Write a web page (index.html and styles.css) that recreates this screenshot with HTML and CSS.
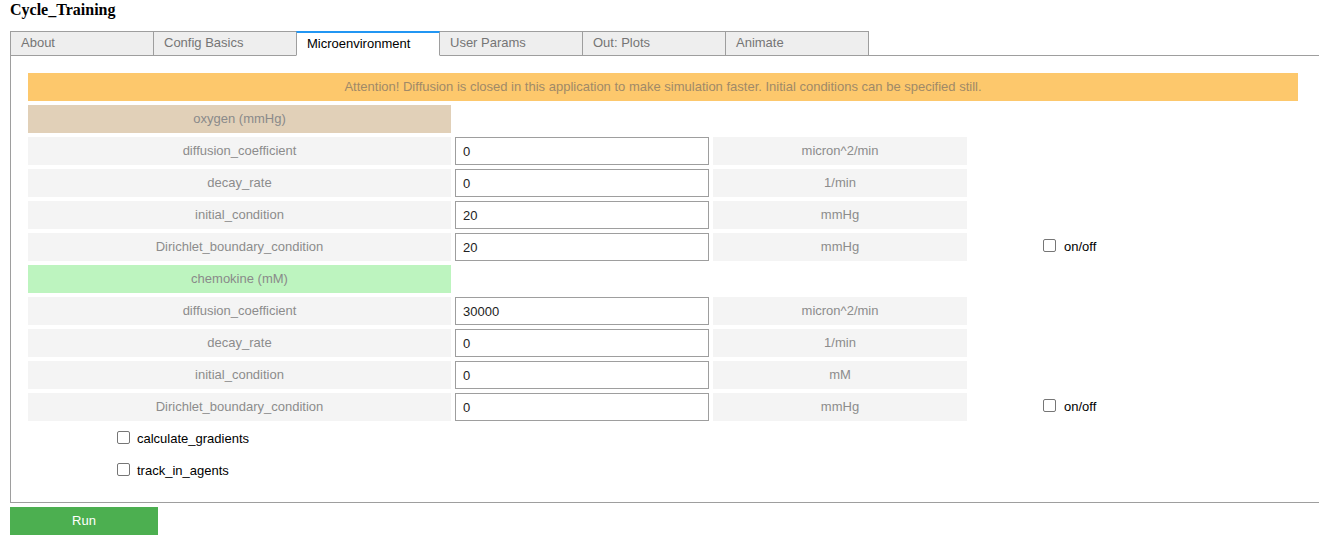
FILE: index.html
```html
<!DOCTYPE html>
<html>
<head>
<meta charset="utf-8">
<link rel="stylesheet" href="styles.css">
</head>
<body>
<div class="app">
  <div class="title">Cycle_Training</div>
  <div class="tabs">
    <div class="tab">About</div>
    <div class="tab">Config Basics</div>
    <div class="tab active">Microenvironment</div>
    <div class="tab">User Params</div>
    <div class="tab">Out: Plots</div>
    <div class="tab">Animate</div>
  </div>
  <div class="panel">
    <div class="attention">Attention! Diffusion is closed in this application to make simulation faster. Initial conditions can be specified still.</div>

    <div class="row"><div class="header oxygen">oxygen (mmHg)</div></div>
    <div class="row"><div class="label">diffusion_coefficient</div><input class="value" value="0"><div class="unit">micron^2/min</div></div>
    <div class="row"><div class="label">decay_rate</div><input class="value" value="0"><div class="unit">1/min</div></div>
    <div class="row"><div class="label">initial_condition</div><input class="value" value="20"><div class="unit">mmHg</div></div>
    <div class="row"><div class="label">Dirichlet_boundary_condition</div><input class="value" value="20"><div class="unit">mmHg</div><label class="onoff"><span class="box"></span>on/off</label></div>

    <div class="row"><div class="header chemokine">chemokine (mM)</div></div>
    <div class="row"><div class="label">diffusion_coefficient</div><input class="value" value="30000"><div class="unit">micron^2/min</div></div>
    <div class="row"><div class="label">decay_rate</div><input class="value" value="0"><div class="unit">1/min</div></div>
    <div class="row"><div class="label">initial_condition</div><input class="value" value="0"><div class="unit">mM</div></div>
    <div class="row"><div class="label">Dirichlet_boundary_condition</div><input class="value" value="0"><div class="unit">mmHg</div><label class="onoff"><span class="box"></span>on/off</label></div>

    <label class="check"><span class="box"></span>calculate_gradients</label>
    <label class="check"><span class="box"></span>track_in_agents</label>
  </div>
  <div class="run">Run</div>
</div>
</body>
</html>
```
FILE: styles.css
```css
html, body {
  margin: 0;
  padding: 0;
  background: #fff;
  overflow: hidden;
}
.app {
  padding-left: 10px;
  font-family: "Liberation Sans", Arial, sans-serif;
  font-size: 13px;
  color: #000;
}
.title {
  font-family: "Liberation Serif", "Times New Roman", serif;
  font-weight: bold;
  font-size: 16px;
  height: 31px;
  line-height: 20px;
}
.tabs {
  display: flex;
  margin-bottom: -1px;
}
.tab {
  position: relative;
  box-sizing: border-box;
  width: 144px;
  height: 25px;
  margin-right: -1px;
  border: 1px solid #9e9e9e;
  background: #eeeeee;
  color: #757575;
  padding: 0 10px;
  line-height: 22px;
}
.tab.active {
  z-index: 1;
  background: #fff;
  color: #000;
  border-top: 2px solid #2196f3;
  border-bottom-color: #fff;
  line-height: 21px;
}
.panel {
  box-sizing: border-box;
  width: 1312px;
  border: 1px solid #9e9e9e;
  padding: 17px 23px 17px 17px;
  display: flex;
  flex-direction: column;
  gap: 4px;
}
.attention {
  height: 28px;
  line-height: 28px;
  background: #fdc86c;
  color: #a08a68;
  text-align: center;
}
.row {
  display: grid;
  grid-template-columns: 423px 254px 254px auto;
  gap: 4px;
  height: 28px;
}
.header {
  line-height: 28px;
  text-align: center;
  color: #8a8a8a;
}
.oxygen { background: #e1d0b8; }
.chemokine { background: #bdf4bf; }
.label, .unit {
  background: #f4f4f4;
  color: #8c8c8c;
  text-align: center;
  line-height: 28px;
}
.value {
  box-sizing: border-box;
  height: 28px;
  margin: 0;
  border: 1px solid #9e9e9e;
  border-radius: 0;
  padding: 0 0 0 7px;
  font-family: "Liberation Sans", Arial, sans-serif;
  font-size: 13px;
  color: #222;
  outline: none;
}
.box {
  box-sizing: border-box;
  display: inline-block;
  width: 13px;
  height: 13px;
  border: 1px solid #767676;
  border-radius: 2px;
  background: #fff;
}
.onoff {
  display: flex;
  align-items: center;
  padding-left: 72px;
  padding-bottom: 2px;
  gap: 8px;
  color: #000;
}
.onoff .box { margin-top: -2px; }
.check {
  display: flex;
  align-items: center;
  height: 28px;
  padding-left: 89px;
  padding-bottom: 2px;
  box-sizing: border-box;
  gap: 7px;
}
.check .box { margin-top: -2px; }
.run {
  margin-top: 4px;
  width: 148px;
  height: 28px;
  line-height: 28px;
  background: #4caf50;
  color: #fff;
  text-align: center;
}
```
